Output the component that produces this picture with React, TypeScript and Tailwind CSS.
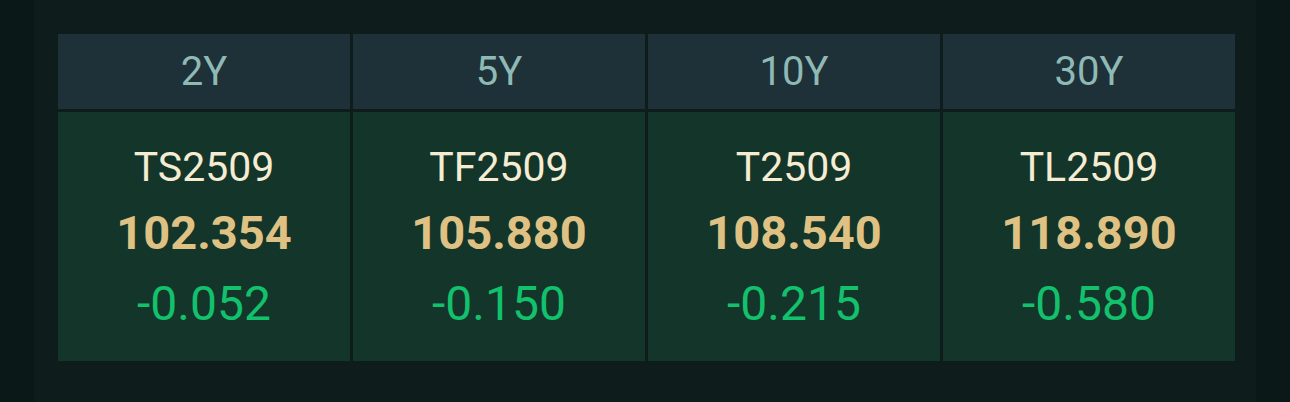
import React from "react";

const items = [
  { tenor: "2Y", sym: "TS2509", price: "102.354", chg: "-0.052" },
  { tenor: "5Y", sym: "TF2509", price: "105.880", chg: "-0.150" },
  { tenor: "10Y", sym: "T2509", price: "108.540", chg: "-0.215" },
  { tenor: "30Y", sym: "TL2509", price: "118.890", chg: "-0.580" },
];

export default function App() {
  return (
    <div
      className="w-[1290px] h-[402px] bg-[#0a1918] flex px-[34px] overflow-hidden"
      style={{ fontFamily: "Roboto, 'Noto Sans', sans-serif" }}
    >
      <div className="flex-1 h-full bg-[#0e1c1c] pt-[34px] pl-6 pr-[21px]">
        <div className="grid grid-cols-4 gap-x-[3px] gap-y-[3px]">
          {items.map((it) => (
            <div
              key={it.tenor + "h"}
              className="h-[75px] bg-[#1e3038] flex items-center justify-center text-[40px] text-[#8fb9b4] leading-none"
            >
              {it.tenor}
            </div>
          ))}
          {items.map((it) => (
            <div
              key={it.tenor + "b"}
              className="h-[249px] bg-[#14352a] flex flex-col items-center justify-center pt-[3px]"
            >
              <div className="text-[41px] leading-[60px] text-[#f6ecd2]">{it.sym}</div>
              <div className="text-[47px] leading-[72px] font-bold text-[#dfc283]">{it.price}</div>
              <div className="text-[48px] leading-[70px] text-[#13c06c]">{it.chg}</div>
            </div>
          ))}
        </div>
      </div>
    </div>
  );
}
